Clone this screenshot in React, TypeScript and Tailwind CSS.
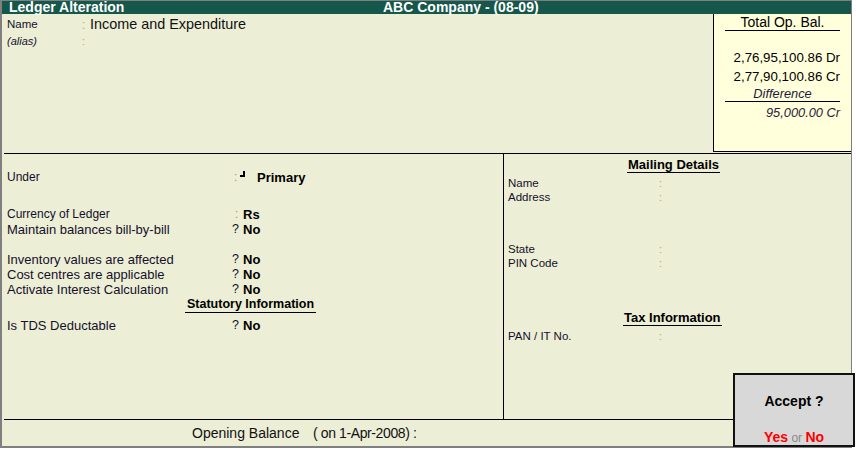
const font = { fontFamily: '"Liberation Sans", Arial, sans-serif' };

function Row({ label, mark, value, small }: { label: string; mark: string; value?: React.ReactNode; small?: boolean }) {
  return (
    <div className="flex h-[15px] items-center leading-[15px]">
      <span className={small ? "w-[225px] text-[12px] text-[#15102a]" : "w-[225px] text-[13px] text-[#15102a]"}>
        {label}
      </span>
      <span
        className={
          mark === ":"
            ? "w-[11px] pl-[3px] text-[12px] text-[#b8962e]"
            : "w-[11px] text-[12.5px] text-[#15102a]"
        }
      >
        {mark}
      </span>
      <span className="text-[13px] font-bold text-black">{value}</span>
    </div>
  );
}

function MailRow({ label }: { label: string }) {
  return (
    <div className="flex h-[14px] items-center leading-[14px]">
      <span className="w-[151px] text-[11.5px] text-[#15102a]">{label}</span>
      <span className="text-[11px] text-[#c9a73a]">:</span>
    </div>
  );
}

export default function App() {
  return (
    <div className="h-[454px] w-[856px] bg-white" style={font}>
      <div className="relative flex h-[448px] w-[852px] flex-col border-t border-r border-b-2 border-l-2 border-[#808080] bg-[#ECEED6]">
        {/* Title bar */}
        <div className="flex h-[13px] items-center bg-[#15574A] pl-[7px] text-[14px] font-bold leading-[13px] text-white">
          <span className="w-[374px]">Ledger Alteration</span>
          <span>ABC Company - (08-09)</span>
        </div>

        {/* Top: name + totals box */}
        <div className="flex h-[138px]">
          <div className="flex-1 pt-[3px] pl-[5px]">
            <div className="flex h-[16px] items-center">
              <span className="w-[75px] text-[11.5px] text-[#15102a]">Name</span>
              <span className="w-[8px] text-[12px] text-[#c9a73a]">:</span>
              <span className="text-[14.4px] text-[#111]">Income and Expenditure</span>
            </div>
            <div className="flex h-[16px] items-center">
              <span className="w-[75px] text-[11px] italic text-[#15102a]">(alias)</span>
              <span className="text-[11px] text-[#c9a73a]">:</span>
            </div>
          </div>
          <div className="w-[138px] border-b border-l border-black bg-[#FFFFDC] px-[11px] pt-[1px] text-[13.3px] text-black">
            <div className="h-[16px] border-b border-black text-center text-[14px] leading-[15px]">Total Op. Bal.</div>
            <div className="mt-[17px] text-right leading-[19px]">
              <div>2,76,95,100.86 Dr</div>
              <div>2,77,90,100.86 Cr</div>
            </div>
            <div className="h-[16px] border-b border-black text-center text-[12.8px] italic leading-[16px] text-[#1a1a3a]">
              Difference
            </div>
            <div className="pt-[3px] text-right text-[12.8px] italic leading-[16px] text-[#2a1a3a]">95,000.00 Cr</div>
          </div>
        </div>

        {/* Middle */}
        <div className="mt-[1px] ml-[2px] flex h-[266px] border-t border-black">
          <div className="w-[500px] border-r border-black pt-[16px] pl-[3px]">
            <div className="flex h-[15px] items-center leading-[15px]">
              <span className="w-[225px] text-[12px] text-[#15102a]">Under</span>
              <span className="w-[8px] pl-[2px] text-[12px] text-[#b8962e]">:</span>
              <span className="mb-[7px] inline-block h-[6px] w-[5px] border-r-2 border-b-2 border-black" />
              <span className="ml-[12px] text-[13px] font-bold text-black">Primary</span>
            </div>
            <div className="mt-[22px]">
              <Row label="Currency of Ledger" mark=":" value="Rs" small />
              <Row label="Maintain balances bill-by-bill" mark="?" value="No" />
            </div>
            <div className="mt-[15px]">
              <Row label="Inventory values are affected" mark="?" value="No" />
              <Row label="Cost centres are applicable" mark="?" value="No" />
              <Row label="Activate Interest Calculation" mark="?" value="No" />
            </div>
            <div className="flex">
              <span className="ml-[178px] inline-block border-b border-black px-[2px] text-[12.5px] font-bold leading-[15px] text-black">
                Statutory Information
              </span>
            </div>
            <div className="mt-[5px]">
              <Row label="Is TDS Deductable" mark="?" value="No" />
            </div>
          </div>

          <div className="flex-1 pt-[3px] pl-[4px]">
            <div className="flex">
              <span className="ml-[119px] inline-block border-b border-black px-[1px] text-[13px] font-bold leading-[15px] text-black">
                Mailing Details
              </span>
            </div>
            <div className="mt-[3px]">
              <MailRow label="Name" />
              <MailRow label="Address" />
            </div>
            <div className="mt-[38px]">
              <MailRow label="State" />
              <MailRow label="PIN Code" />
            </div>
            <div className="mt-[40px] flex">
              <span className="ml-[115px] inline-block border-b border-black px-[1px] text-[13px] font-bold leading-[15px] text-black">
                Tax Information
              </span>
            </div>
            <div className="mt-[3px]">
              <MailRow label="PAN / IT No." />
            </div>
          </div>
        </div>

        {/* Bottom */}
        <div className="ml-[2px] flex h-[27px] items-center border-t border-black pl-[188px] text-[#111]">
          <span className="whitespace-pre text-[14px]">{"Opening Balance   "}</span>
          <span className="whitespace-pre pl-[2px] text-[14px] tracking-[-0.4px]">{"( on 1-Apr-2008) :"}</span>
        </div>

        {/* Accept dialog */}
        <div className="absolute top-[372px] left-[731px] flex h-[74px] w-[122px] flex-col items-center border-2 border-[#111] bg-[#D8D8D8] pt-[18px]">
          <div className="text-[14px] font-bold leading-[16px] text-black">Accept ?</div>
          <div className="mt-[20px] text-[14px] leading-[16px]">
            <span className="font-bold text-[#FF0000]">Yes</span>
            <span className="text-[12px] text-[#888]"> or </span>
            <span className="font-bold text-[#FF0000]">No</span>
          </div>
        </div>
      </div>
    </div>
  );
}
